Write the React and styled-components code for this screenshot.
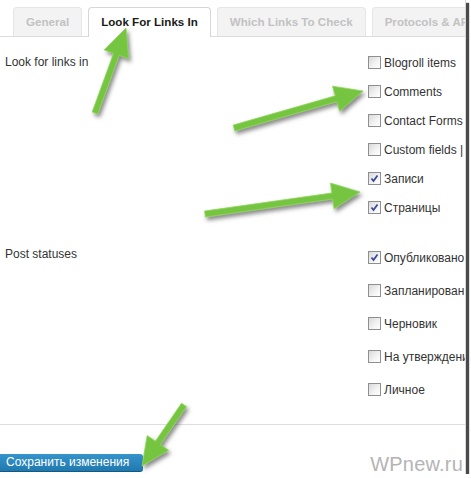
import React from "react";
import styled, { createGlobalStyle } from "styled-components";

const Global = createGlobalStyle`
  html, body { margin: 0; padding: 0; background: #fff; }
  body { font-family: Arial, "Liberation Sans", sans-serif; }
`;

const Frame = styled.div`
  position: relative;
  width: 466px;
  height: 474px;
  box-sizing: border-box;
  background: #fff;
  border-right: 1px solid #d8d8d8;
  box-shadow: 3px 3px 1px #4a4a4a;
  overflow: hidden;
  display: flex;
  flex-direction: column;
`;

const TabBar = styled.div`
  display: flex;
  gap: 6px;
  padding: 7px 0 0 13px;
  height: 29px;
  border-bottom: 1px solid #dcdcdc;
  white-space: nowrap;
`;

const Tab = styled.div`
  height: ${(p) => (p.$active ? "29px" : "28px")};
  line-height: 28px;
  padding: 0 12px;
  border: 1px solid ${(p) => (p.$active ? "#d6d6d6" : "#e6e6e6")};
  border-bottom: none;
  border-radius: 4px 4px 0 0;
  background: ${(p) => (p.$active ? "#fff" : "#f3f3f3")};
  color: ${(p) => (p.$active ? "#1a1a1a" : "#c2c2c2")};
  font-size: 11.6px;
  font-weight: bold;
  flex-shrink: 0;
`;

const Form = styled.div`
  display: grid;
  grid-template-columns: 368px 1fr;
  padding-top: 11px;
  row-gap: 19px;
`;

const RowLabel = styled.div`
  padding-left: 5px;
  font-size: 12px;
  color: #333;
  line-height: ${(p) => p.$lh}px;
  white-space: nowrap;
`;

const List = styled.div`
  display: flex;
  flex-direction: column;
`;

const Item = styled.label`
  display: flex;
  align-items: center;
  gap: 3px;
  height: ${(p) => p.$h}px;
  font-size: 12px;
  color: #333;
  white-space: nowrap;
`;

const Box = styled.span`
  width: 11px;
  height: 11px;
  flex-shrink: 0;
  border: 1px solid #8f8f8f;
  background: linear-gradient(135deg, #d9d9d9 0%, #f4f4f4 60%, #ffffff 100%);
  display: flex;
  align-items: center;
  justify-content: center;
`;

const Divider = styled.div`
  margin-top: 18px;
  height: 1px;
  background: #dedede;
`;

const Footer = styled.div`
  display: flex;
  justify-content: space-between;
  align-items: flex-end;
  padding: 29px 2px 0 0;
`;

const SaveButton = styled.button`
  width: 143px;
  height: 18px;
  padding: 0 0 0 6px;
  text-align: left;
  border: none;
  border-bottom: 1px solid #145a80;
  border-radius: 0 3px 3px 0;
  background: linear-gradient(#3594cb, #2079ae);
  color: #fff;
  font-family: Arial, "Liberation Sans", sans-serif;
  font-size: 12px;
  line-height: 17px;
`;

const Watermark = styled.div`
  font-size: 20px;
  color: #b4b4b4;
  line-height: 20px;
  margin-bottom: -2px;
  letter-spacing: 0.2px;
`;

const Overlay = styled.svg`
  position: absolute;
  left: 0;
  top: 0;
  pointer-events: none;
`;

function Check({ checked }) {
  return (
    <Box>
      {checked && (
        <svg width="9" height="9" viewBox="0 0 9 9">
          <path d="M1.5 4.5 L3.5 7 L7.5 1.5" fill="none" stroke="#3b4a9c" strokeWidth="1.8" />
        </svg>
      )}
    </Box>
  );
}

function arrowPoints([tx, ty], [px, py], shaft = 6, headLen = 28, headW = 26) {
  const dx = px - tx;
  const dy = py - ty;
  const len = Math.hypot(dx, dy);
  const ux = dx / len;
  const uy = dy / len;
  const nx = -uy;
  const ny = ux;
  const bx = px - ux * headLen;
  const by = py - uy * headLen;
  const s = shaft / 2;
  const h = headW / 2;
  const pts = [
    [tx + nx * s, ty + ny * s],
    [bx + nx * s, by + ny * s],
    [bx + nx * h, by + ny * h],
    [px, py],
    [bx - nx * h, by - ny * h],
    [bx - nx * s, by - ny * s],
    [tx - nx * s, ty - ny * s],
  ];
  return pts.map((p) => p.map((v) => v.toFixed(1)).join(",")).join(" ");
}

const arrows = [
  [[95, 113], [126, 28]],
  [[234, 128], [363, 91]],
  [[205, 214], [360, 192]],
  [[184, 405], [142, 466]],
];

const group1 = [
  ["Blogroll items", false],
  ["Comments", false],
  ["Contact Forms", false],
  ["Custom fields |", false],
  ["Записи", true],
  ["Страницы", true],
];

const group2 = [
  ["Опубликовано", true],
  ["Запланирован", false],
  ["Черновик", false],
  ["На утверждени", false],
  ["Личное", false],
];

export default function App() {
  return (
    <>
      <Global />
      <Frame>
        <TabBar>
          <Tab>General</Tab>
          <Tab $active>Look For Links In</Tab>
          <Tab>Which Links To Check</Tab>
          <Tab>Protocols &amp; APIs</Tab>
        </TabBar>
        <Form>
          <RowLabel $lh={29}>Look for links in</RowLabel>
          <List>
            {group1.map(([t, c]) => (
              <Item key={t} $h={29}>
                <Check checked={c} />
                {t}
              </Item>
            ))}
          </List>
          <RowLabel $lh={26}>Post statuses</RowLabel>
          <List>
            {group2.map(([t, c]) => (
              <Item key={t} $h={33}>
                <Check checked={c} />
                {t}
              </Item>
            ))}
          </List>
        </Form>
        <Divider />
        <Footer>
          <SaveButton>Сохранить изменения</SaveButton>
          <Watermark>WPnew.ru</Watermark>
        </Footer>
        <Overlay width="466" height="474">
          <defs>
            <filter id="sh" x="-30%" y="-30%" width="160%" height="160%">
              <feDropShadow dx="2" dy="3" stdDeviation="2" floodColor="#555" floodOpacity="0.7" />
            </filter>
          </defs>
          {arrows.map(([a, b], i) => (
            <polygon
              key={i}
              points={arrowPoints(a, b)}
              fill="#76c541"
              stroke="#8fd65c"
              strokeWidth="0.8"
              filter="url(#sh)"
            />
          ))}
        </Overlay>
      </Frame>
    </>
  );
}
